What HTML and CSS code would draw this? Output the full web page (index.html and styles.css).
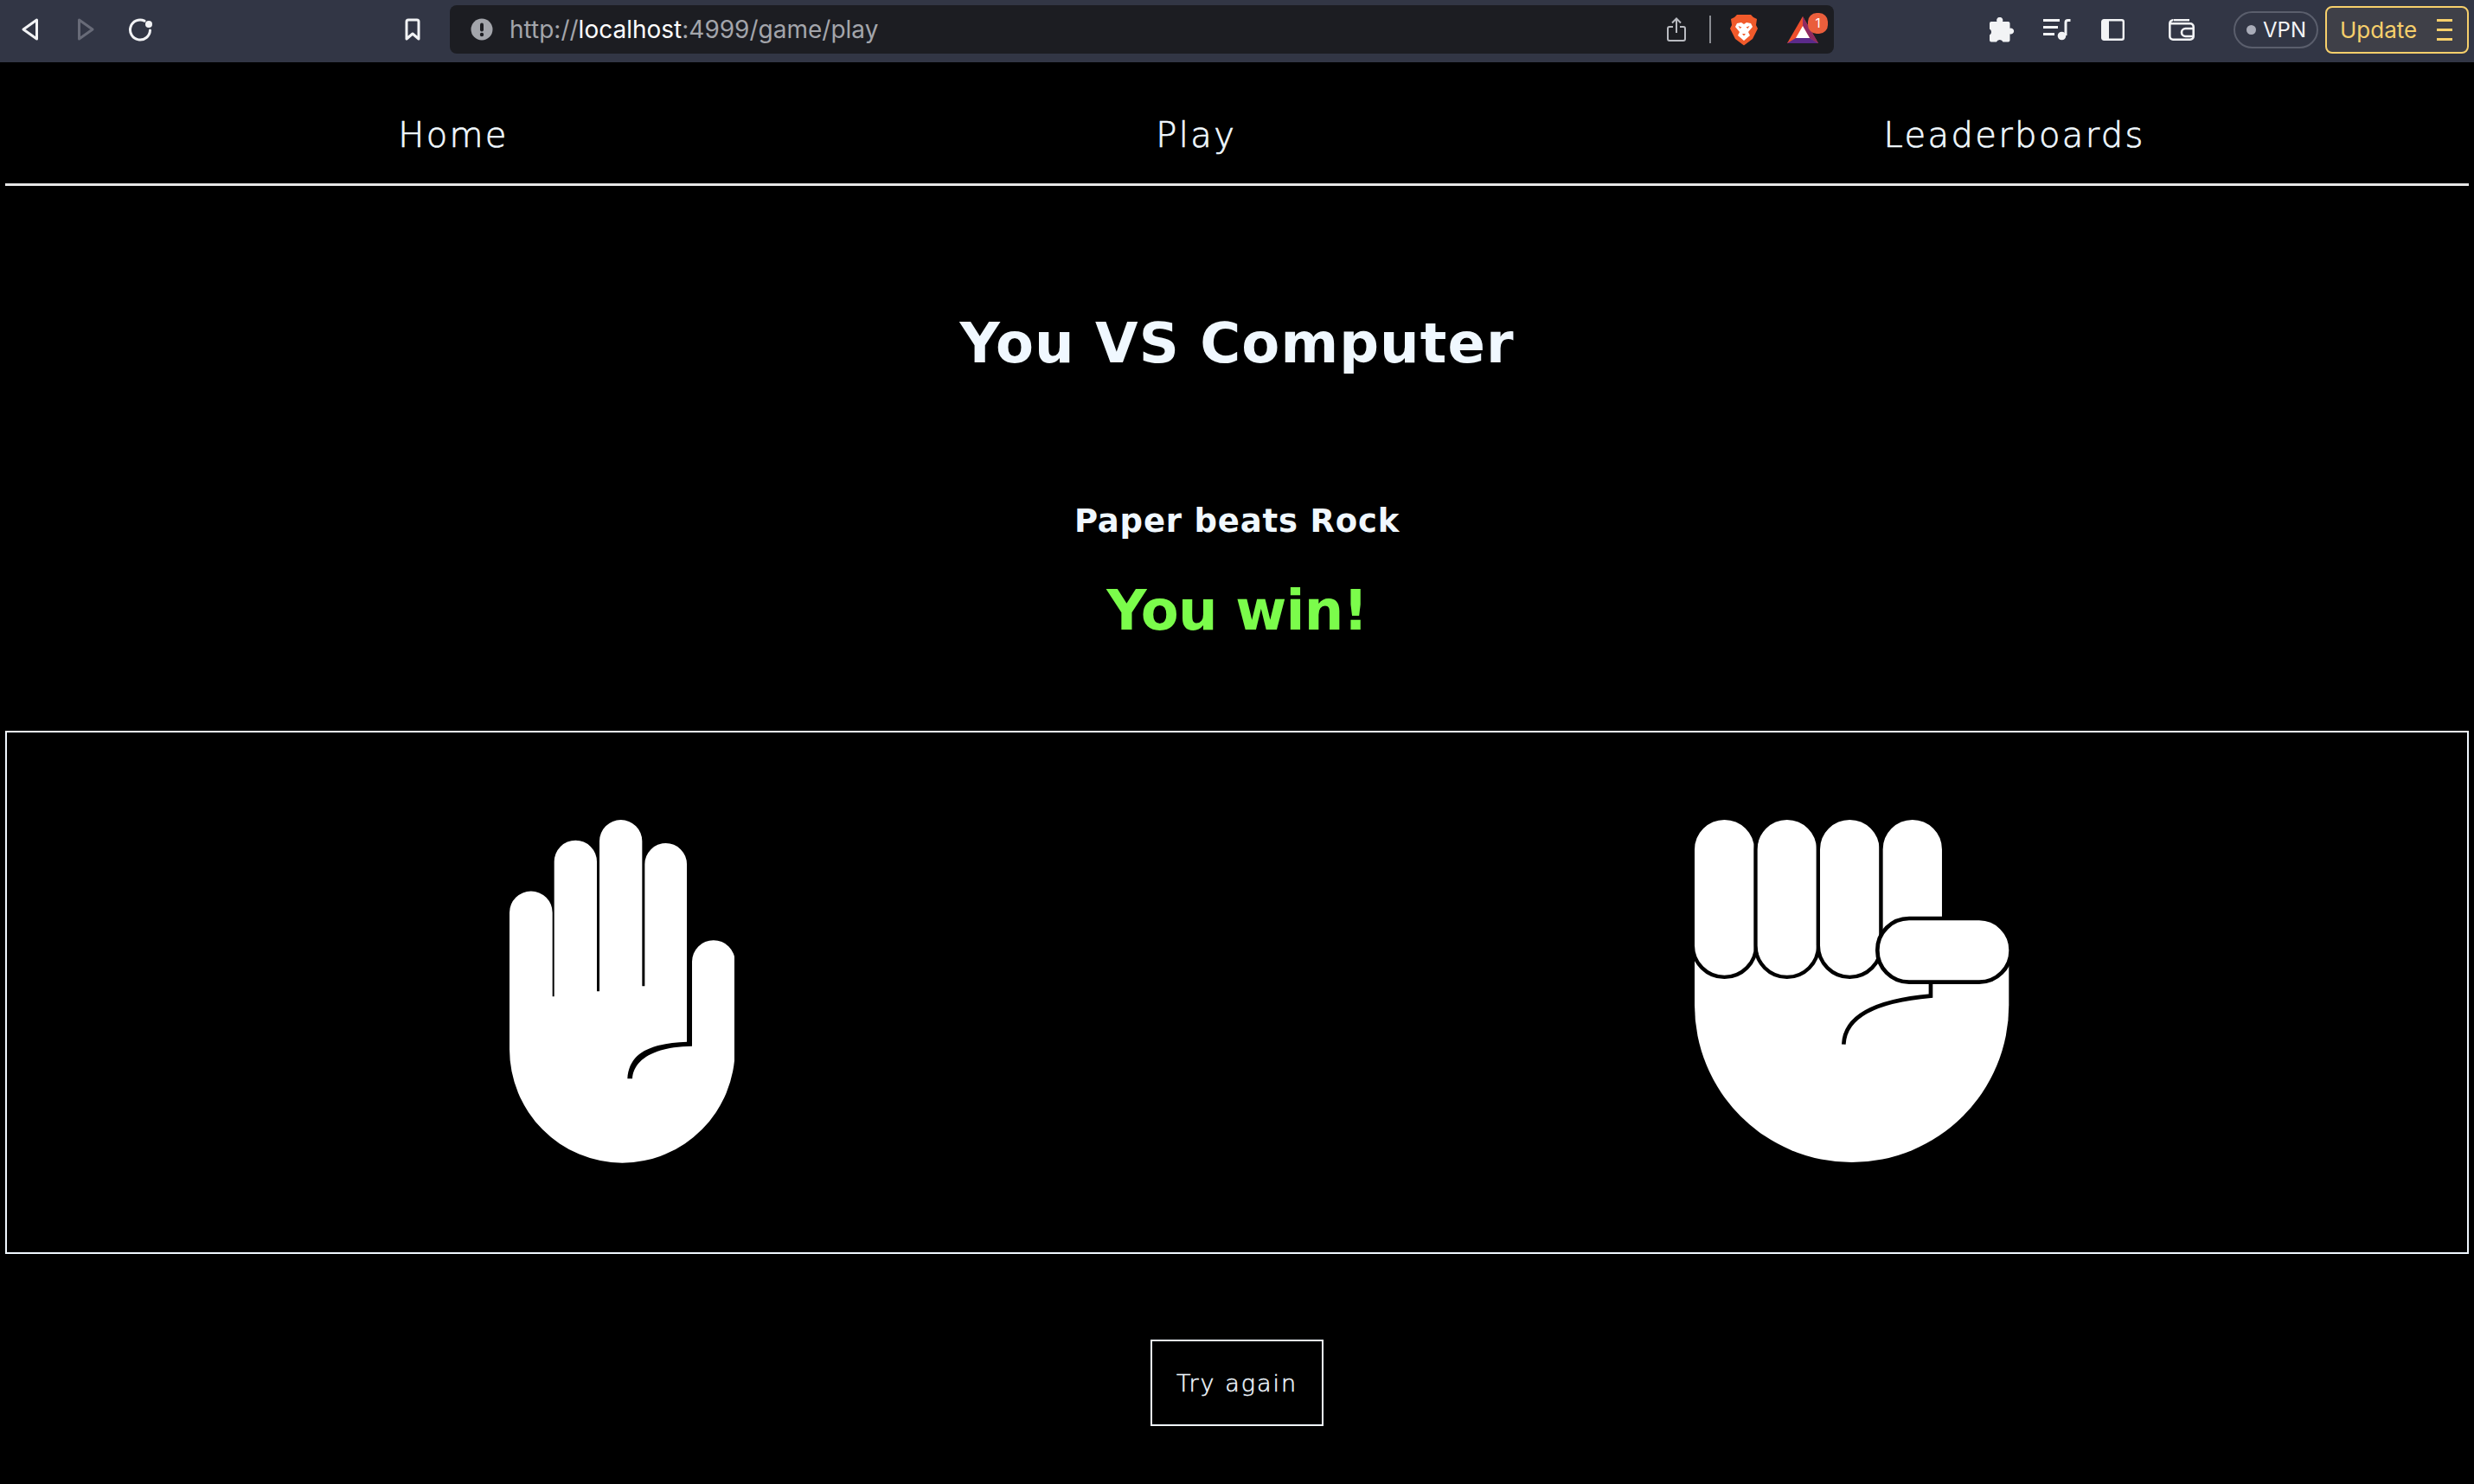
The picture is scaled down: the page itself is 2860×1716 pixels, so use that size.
FILE: index.html
```html
<!DOCTYPE html>
<html lang="en">
<head>
<meta charset="utf-8">
<title>Rock Paper Scissors</title>
<link rel="stylesheet" href="styles.css">
</head>
<body>
<header class="chrome">
  <div class="chrome-nav">
    <svg class="ico ico-back" viewBox="0 0 20 26"><path d="M17.500 2 V24 L2 13 Z" fill="none" stroke="#f2f3f5" stroke-width="3" stroke-linejoin="round"/></svg>
    <svg class="ico ico-fwd" viewBox="0 0 20 26"><path d="M2.500 2 V24 L18 13 Z" fill="none" stroke="#686b78" stroke-width="3" stroke-linejoin="round"/></svg>
    <svg class="ico ico-reload" viewBox="0 0 28 28"><path d="M19 4.200 A11.500 11.500 0 1 0 25.500 15" fill="none" stroke="#f2f3f5" stroke-width="3" stroke-linecap="round"/><circle cx="24" cy="8" r="4" fill="#f2f3f5"/></svg>
    <svg class="ico ico-mark" viewBox="0 0 20 26"><path d="M3 4 a2 2 0 0 1 2-2 h10 a2 2 0 0 1 2 2 V24 L10 18 L3 24 Z" fill="none" stroke="#f2f3f5" stroke-width="3" stroke-linejoin="round"/></svg>
  </div>
  <div class="urlbar">
    <svg class="ico ico-info" viewBox="0 0 26 26"><circle cx="13" cy="13" r="12.500" fill="#a3a5ab"/><rect x="11" y="5.500" width="4" height="10" rx="2" fill="#1c1d22"/><circle cx="13" cy="19" r="2.200" fill="#1c1d22"/></svg>
    <span class="url"><span class="url-dim">http://</span>localhost<span class="url-dim">:4999/game/play</span></span>
    <svg class="ico ico-share" viewBox="0 0 22 28"><path d="M7 11 H3 a2 2 0 0 0-2 2 V25 a2 2 0 0 0 2 2 H19 a2 2 0 0 0 2-2 V13 a2 2 0 0 0-2-2 H15 M11 18 V2 M6 6.500 L11 1.500 L16 6.500" fill="none" stroke="#b9bbc1" stroke-width="2"/></svg>
    <span class="url-sep"></span>
    <svg class="ico ico-lion" viewBox="0 0 32 37"><path d="M8 1 H24 L27 4 L31 6 L30 13 L32 17 L26 29 L16 36.500 L6 29 L0 17 L2 13 L1 6 L5 4 Z" fill="#f15a2b"/><path d="M8 11 L13 10 L16 12 L19 10 L24 11 L26 15 L21 21 L23 25 L16 31 L9 25 L11 21 L6 15 Z" fill="#fff"/><path d="M14 23 H18 L16 25.500 Z M9.500 14 L13.500 15.500 L11.500 17 Z M22.500 14 L18.500 15.500 L20.500 17 Z" fill="#f15a2b"/></svg>
    <div class="rewards">
      <svg class="ico ico-bat" viewBox="0 0 36 31"><path d="M18 0 L36 31 H0 Z" fill="#ee4f2d"/><path d="M18 0 L36 31 L26 25 L18 11 Z" fill="#8e2a63"/><path d="M0 31 L10 25 H26 L36 31 Z" fill="#5b2a8a"/><path d="M18 11 L26 25 H10 Z" fill="#fff"/></svg>
      <span class="badge">1</span>
    </div>
  </div>
  <div class="chrome-tools">
    <svg class="ico ico-puzzle" viewBox="0 0 29 29"><path d="M0 7 a2 2 0 0 1 2-2 H8.500 a3.600 3.600 0 1 1 6.500 0 H21.500 a2 2 0 0 1 2 2 V12.700 a3.500 3.500 0 1 1 0 6.600 V26.500 a2 2 0 0 1-2 2 H15.500 a4 4 0 0 0-7.500 0 H2 a2 2 0 0 1-2-2 V20.500 a4 4 0 0 0 0-7 Z" fill="#f2f3f5"/></svg>
    <svg class="ico ico-list" viewBox="0 0 32 25"><path d="M0 1.500 H19 M0 9.500 H17 M0 17.500 H13" stroke="#f2f3f5" stroke-width="3" fill="none"/><path d="M26 19 V4 Q26 1.500 28.500 1.500 H31.500" stroke="#f2f3f5" stroke-width="3" fill="none"/><circle cx="21.500" cy="19.500" r="4.800" fill="#f2f3f5"/></svg>
    <svg class="ico ico-side" viewBox="0 0 27 25"><rect x="1.200" y="1.200" width="24.600" height="22.600" rx="2" fill="none" stroke="#f2f3f5" stroke-width="2.400"/><rect x="1" y="1" width="8" height="23" fill="#f2f3f5"/></svg>
    <svg class="ico ico-wallet" viewBox="0 0 30 25"><path d="M6 1.300 H24 M5.500 1.300 A4 4 0 0 0 1.300 5.500 V20 a3.700 3.700 0 0 0 3.700 3.700 H25 a3.700 3.700 0 0 0 3.700-3.700 V9 a3.700 3.700 0 0 0-3.700-3.700 H2" fill="none" stroke="#f2f3f5" stroke-width="2.600"/><path d="M28.500 11 H19.500 a4.500 4.500 0 0 0 0 9 H28.500" fill="none" stroke="#f2f3f5" stroke-width="2.600"/></svg>
    <div class="vpn"><span class="vpn-dot"></span>VPN</div>
    <div class="update">Update
      <span class="burger"><i></i><i></i><i></i></span>
    </div>
  </div>
</header>

<main class="page">
  <nav class="site-nav">
    <a class="nav-link">Home</a>
    <a class="nav-link">Play</a>
    <a class="nav-link">Leaderboards</a>
  </nav>

  <h1 class="title">You VS Computer</h1>
  <h2 class="reason">Paper beats Rock</h2>
  <h1 class="result">You win!</h1>

  <section class="arena">
    <div class="hand-slot">
      <svg class="hand-paper" viewBox="146 85 782 1190">
        <path fill="#fff" d="M146 880 V407 a74.500 74.500 0 0 1 149 0 V698 h6 V230 a74 74 0 0 1 148 0 V680 h9 V159 a74 74 0 0 1 148 0 V662 h9 V239 a73 73 0 0 1 146 0 V855 C640 860 560 890 555 983 h17 C576 920 640 872 779 870 V577 a74.500 74.500 0 0 1 149 0 V880 A391 395 0 0 1 146 880 Z"/>
      </svg>
    </div>
    <div class="hand-slot">
      <svg class="hand-rock" viewBox="118 87 1090 1188">
        <path fill="#fff" d="M118 560 V730 A545 545 0 0 0 1208 730 V560 Z"/>
        <g fill="#fff" stroke="#000" stroke-width="13">
          <rect x="111.500" y="80.500" width="220" height="552" rx="110"/>
          <rect x="329.500" y="80.500" width="218" height="552" rx="109"/>
          <rect x="546.500" y="80.500" width="219" height="552" rx="109.500"/>
          <rect x="764.500" y="80.500" width="218" height="552" rx="109"/>
          <rect x="752" y="429" width="463" height="221" rx="110" stroke-width="14"/>
        </g>
        <path d="M937 657 V698 C800 710 640 745 635 866" fill="none" stroke="#000" stroke-width="14"/>
      </svg>
    </div>
  </section>

  <div class="actions"><button class="again">Try again</button></div>
</main>
</body>
</html>
```
FILE: styles.css
```css
* { box-sizing: border-box; }
html, body { margin: 0; height: 100%; background: #000; }
body { font-family: "DejaVu Sans", sans-serif; color: #f0f8ff; overflow: hidden; }

.chrome { height: 72px; padding-bottom: 4px; background: #323645; display: flex; align-items: center; font-family: Inter, "Liberation Sans", sans-serif; }
.ico { display: block; flex: none; }

.chrome-nav { display: flex; align-items: center; width: 520px; padding-left: 25px; flex: none; }
.ico-back { width: 20px; height: 26px; }
.ico-fwd { width: 20px; height: 26px; margin-left: 44px; }
.ico-reload { width: 28px; height: 28px; margin-left: 39px; }
.ico-mark { width: 20px; height: 26px; margin-left: 291px; }

.urlbar { width: 1600px; height: 56px; background: #1c1d22; border-radius: 8px; display: flex; align-items: center; padding-left: 24px; flex: none; }
.ico-info { width: 26px; height: 26px; }
.url { margin-left: 19px; font-size: 28px; color: #fff; width: 1337px; white-space: nowrap; }
.url-dim { color: #a3a5ab; }
.ico-share { width: 22px; height: 28px; margin-left: 1px; }
.url-sep { width: 2px; height: 32px; background: #8a8c92; margin-left: 27px; }
.ico-lion { width: 32px; height: 37px; margin-left: 22px; }
.rewards { position: relative; margin-left: 34px; width: 36px; height: 31px; }
.ico-bat { width: 36px; height: 31px; }
.badge { position: absolute; left: 24px; top: -4px; width: 23px; height: 24px; border-radius: 10px; background: #ea5e3c; color: #fff; font-size: 15px; line-height: 24px; text-align: center; }

.chrome-tools { display: flex; align-items: center; flex: none; padding-left: 180px; }
.ico-puzzle { width: 29px; height: 29px; }
.ico-list { width: 32px; height: 25px; margin-left: 33px; }
.ico-side { width: 27px; height: 25px; margin-left: 35px; }
.ico-wallet { width: 30px; height: 25px; margin-left: 51px; }
.vpn { width: 98px; height: 43px; margin-left: 45px; border: 2px solid #5a5e6c; border-radius: 22px; display: flex; align-items: center; padding-left: 13px; gap: 8px; font-size: 24px; color: #f2f3f5; }
.vpn-dot { width: 11px; height: 11px; border-radius: 50%; background: #a9acb8; }
.update { width: 166px; height: 55px; margin-left: 8px; border: 2px solid #f6cf6b; border-radius: 8px; background: #3f4048; color: #f6cf6b; display: flex; align-items: center; padding-left: 15px; font-size: 26px; }
.burger { display: flex; flex-direction: column; gap: 8px; margin-left: auto; margin-right: 17px; }
.burger i { display: block; width: 18px; height: 3px; background: #f6cf6b; }

.page { padding: 0 6px; }
.site-nav { height: 143px; padding-top: 28px; border-bottom: 3px solid #e6e6e6; display: flex; justify-content: space-around; align-items: center; padding-left: 80px; }
.nav-link { font-size: 40px; font-weight: 200; letter-spacing: 2.400px; color: #f0f8ff; -webkit-text-stroke: 0.7px #f0f8ff; }

.title, .reason, .result { margin: 0; text-align: center; font-weight: 700; }
.title { margin-top: 142px; font-size: 64px; line-height: 80px; letter-spacing: 1.100px; }
.reason { margin-top: 141px; font-size: 37px; line-height: 50px; letter-spacing: 0.800px; }
.result { margin-top: 38px; font-size: 64px; line-height: 80px; letter-spacing: -0.800px; color: #7bfc4b; }

.arena { margin-top: 99px; height: 605px; border: 2px solid #f0f8ff; display: grid; grid-template-columns: 1fr 1fr; }
.hand-slot { display: flex; justify-content: center; padding-top: 101px; }
.hand-paper { width: 260.700px; height: 396.700px; display: block; }
.hand-rock { width: 363.300px; height: 396px; display: block; }

.actions { margin-top: 99px; display: flex; justify-content: center; }
.again { width: 200px; height: 100px; background: #000; border: 2px solid #f0f8ff; color: #f0f8ff; font-family: "DejaVu Sans", sans-serif; font-weight: 200; font-size: 27px; letter-spacing: 2px; -webkit-text-stroke: 0.5px #f0f8ff; padding: 0; }
```
